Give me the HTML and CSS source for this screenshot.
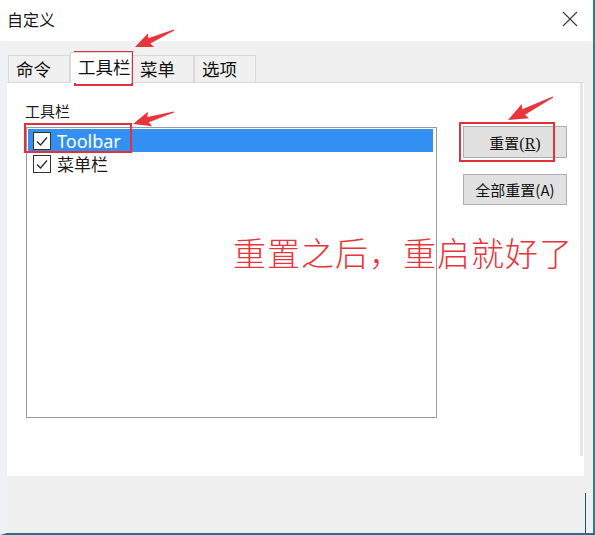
FILE: index.html
```html
<!DOCTYPE html>
<html lang="zh">
<head>
<meta charset="utf-8">
<title>自定义</title>
<link rel="stylesheet" href="styles.css">
</head>
<body>
<div class="window">
  <div class="titlebar">
    <span class="title">自定义</span>
    <svg class="close" width="16" height="16" viewBox="0 0 16 16"><path d="M1 1 L15 15 M15 1 L1 15" stroke="#3a3a3a" stroke-width="1.1" fill="none"/></svg>
  </div>
  <div class="tabs">
    <div class="tab">命令</div>
    <div class="tab active">工具栏</div>
    <div class="tab">菜单</div>
    <div class="tab">选项</div>
  </div>
  <div class="panel">
    <div class="content">
      <div class="left">
        <div class="label">工具栏</div>
        <div class="listbox">
          <div class="row selected">
            <span class="check"><svg width="16" height="16" viewBox="0 0 16 16"><polyline points="3,8.5 6.5,12 13,4.5" fill="none" stroke="#2a2a2a" stroke-width="1.3"/></svg></span>
            <span class="row-text latin">Toolbar</span>
          </div>
          <div class="row">
            <span class="check"><svg width="16" height="16" viewBox="0 0 16 16"><polyline points="3,8.5 6.5,12 13,4.5" fill="none" stroke="#2a2a2a" stroke-width="1.3"/></svg></span>
            <span class="row-text">菜单栏</span>
          </div>
        </div>
      </div>
      <div class="buttons">
        <button class="btn">重置<span class="key">(<u>R</u>)</span></button>
        <button class="btn">全部重置(A)</button>
      </div>
    </div>
    <div class="edge"></div>
  </div>
  <div class="footer"><div class="grip"></div></div>

  <div class="note">重置之后，重启就好了</div>
  <div class="mark mark-tab"></div>
  <div class="mark mark-row"></div>
  <div class="mark mark-btn"></div>
  <svg class="arrows" width="595" height="535" viewBox="0 0 595 535">
    <g fill="#e8353b">
      <polygon transform="translate(174,30) rotate(156.4)" points="0,-0.6 27,-2.8 25,-7.5 42.5,0 25,7.5 27,2.8 0,0.6"/>
      <polygon transform="translate(174,112) rotate(163.7)" points="0,-0.6 27,-2.8 25,-7.5 42.7,0 25,7.5 27,2.8 0,0.6"/>
      <polygon transform="translate(553,97) rotate(152.9)" points="0,-0.6 33,-3 31,-8 50.5,0 31,8 33,3 0,0.6"/>
    </g>
  </svg>
</div>
</body>
</html>
```
FILE: styles.css
```css
* { box-sizing: border-box; }
html, body { margin: 0; padding: 0; }
body {
  width: 595px;
  height: 535px;
  overflow: hidden;
  background: #f0f0f0;
  font-family: "Noto Sans CJK SC", "Noto Sans", sans-serif;
  color: #1a1a1a;
}
.window {
  position: relative;
  width: 595px;
  height: 535px;
  display: flex;
  flex-direction: column;
  background: #f0f0f0;
  border-right: 2px solid #2b7d8f;
  border-bottom: 2px solid #2b6f86;
  border-left: 7px solid #eef2f6;
}
.titlebar {
  height: 41px;
  flex: none;
  background: #ffffff;
  margin-left: -7px;
  padding: 0 15px 0 7px;
  display: flex;
  align-items: center;
  justify-content: space-between;
}
.title { font-size: 16px; line-height: 20px; margin-top: -3px; }
.close { margin-top: -4px; }
.tabs {
  height: 41px;
  flex: none;
  display: flex;
  align-items: flex-end;
  padding-left: 1px;
}
.tab {
  width: 62px;
  height: 27px;
  padding-left: 7px;
  font-size: 17.5px;
  line-height: 26px;
  background: #f0f0f0;
  border: 1px solid #d9d9d9;
  border-bottom: none;
  color: #111;
}
.tab.active {
  height: 31px;
  margin-bottom: -1px;
  background: #ffffff;
  line-height: 28px;
  position: relative;
  z-index: 1;
}
.panel {
  height: 394px;
  flex: none;
  background: #ffffff;
  border-top: 1px solid #d9d9d9;
  display: flex;
  margin-right: 9px;
}
.content {
  flex: 1;
  display: flex;
  gap: 26px;
  padding-left: 19px;
}
.left { width: 411px; }
.label {
  margin-top: 19px;
  font-size: 15px;
  line-height: 18px;
  margin-left: -1px;
}
.listbox {
  margin-top: 7px;
  height: 291px;
  border: 1px solid #9a9a9a;
  padding: 1px 3px 0 1px;
}
.row {
  height: 23px;
  display: flex;
  align-items: center;
  padding-left: 5px;
  gap: 6px;
}
.row.selected { background: #3390f2; color: #ffffff; }
.check {
  width: 18px;
  height: 18px;
  border: 1px solid #333;
  background: #ffffff;
  display: flex;
  align-items: center;
  justify-content: center;
}
.row-text { font-size: 17px; line-height: 20px; }
.row-text.latin { font-family: "Noto Sans", sans-serif; font-size: 18px; }
.buttons {
  width: 104px;
  padding-top: 43px;
  display: flex;
  flex-direction: column;
  gap: 16px;
}
.btn {
  height: 32px;
  background: #e1e1e1;
  border: 1px solid #adadad;
  font-family: "Noto Sans CJK SC", sans-serif;
  font-size: 15px;
  color: #111;
  padding: 0;
}
.btn + .btn { height: 31px; }
.key { font-family: "Liberation Serif", "Noto Sans CJK SC", serif; font-size: 16px; }
.edge {
  width: 3px;
  height: 373px;
  background: #e6e6e6;
  margin-right: 1px;
  flex: none;
}
.footer {
  flex: 1;
  position: relative;
}
.grip {
  position: absolute;
  right: 7px;
  top: 17px;
  width: 1px;
  height: 40px;
  background: #1d4f7a;
}
.note {
  position: absolute;
  left: 226px;
  top: 232px;
  font-family: "Noto Sans CJK SC", serif;
  font-weight: 300;
  font-size: 33px;
  line-height: 40px;
  letter-spacing: 1px;
  color: #e8353b;
  white-space: nowrap;
}
.mark {
  position: absolute;
  border: 2px solid #e0323a;
}
.mark-tab { left: 67px; top: 51px; width: 59px; height: 35px; }
.mark-row { left: 17px; top: 123px; width: 108px; height: 30px; }
.mark-btn { left: 452px; top: 122px; width: 96px; height: 40px; }
.arrows {
  position: absolute;
  left: -7px;
  top: 0;
  pointer-events: none;
}
```
